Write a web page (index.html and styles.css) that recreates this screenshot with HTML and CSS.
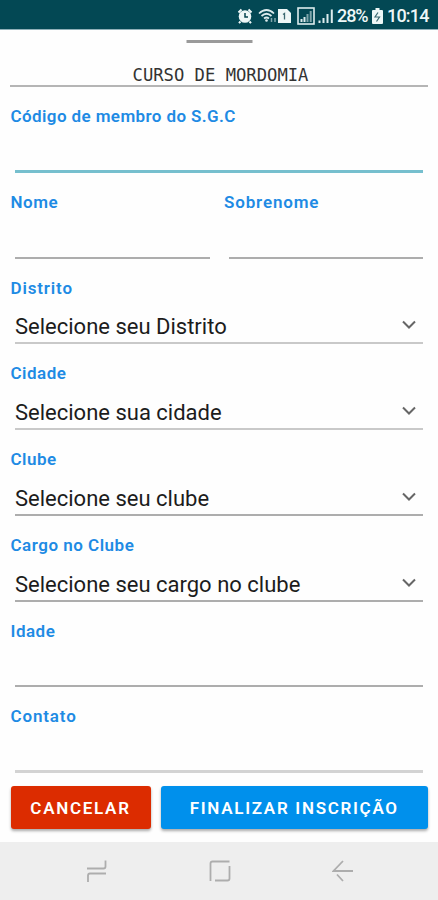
FILE: index.html
```
<!DOCTYPE html>
<html lang="pt-BR">
<head>
    <meta charset="UTF-8">
    <meta name="viewport" content="width=device-width, initial-scale=1">
    <title>Curso de Mordomia</title>
    <link rel="stylesheet" href="styles.css">
</head>

<body>
<div class="status">
    <svg width="16" height="16" viewBox="0 0 16 16">
        <circle cx="8" cy="8.5" r="6.3" fill="#eef7f7"/>
        <path d="M1.5 4.5L4.5 1.5M11.5 1.5l3 3M3.5 13.5L2 15.2M12.5 13.5l1.5 1.7" stroke="#eef7f7" stroke-width="2"/>
        <path d="M8 5v4h3" fill="none" stroke="#04444f" stroke-width="1.5"/>
    </svg>
    <svg class="wifi" width="20" height="16" viewBox="0 0 20 16" fill="none" stroke="#dcebed">
        <path d="M1 5.5Q8.500-1.500 16 5.500M3.500 8Q8.500 3.500 13.500 8M6 10.500q2.500-2 5 0" stroke-width="1.7"/>
        <circle cx="8.500" cy="12.500" r="1.300" fill="#dcebed" stroke="none"/>
        <path d="M13.500 10v4M17 10v4" stroke="#7fa5ab" stroke-width="1.500"/>
    </svg>
    <svg class="sim" width="14" height="16" viewBox="0 0 14 16">
        <path d="M0 1h9l4 4v10H0z" fill="#eef7f7"/>
        <path d="M5 6.500L6.500 5.500v6" fill="none" stroke="#3a6870" stroke-width="1.300"/>
    </svg>
    <svg class="boxed" width="18" height="18" viewBox="0 0 18 18">
        <rect x="1" y="1" width="16" height="16" fill="none" stroke="#dcebed" stroke-width="1.600"/>
        <path d="M4.500 12v3M7.500 10v5" stroke="#dcebed" stroke-width="2"/>
        <path d="M10.500 7v8M13.700 4v11" stroke="#7fa5ab" stroke-width="2"/>
    </svg>
    <svg class="signal" width="16" height="16" viewBox="0 0 16 16" stroke="#dcebed" stroke-width="2">
        <path d="M1.500 12.500v2.500M5.500 10v5M9.500 6v9M13.800 1.500V15"/>
    </svg>
    <span class="percent">28%</span>
    <svg class="battery" width="11" height="16" viewBox="0 0 11 16">
        <path d="M3.500 0h4v2H10q1 0 1 1v12q0 1-1 1H1q-1 0-1-1V3q0-1 1-1h2.500z" fill="#eef7f7"/>
        <path d="M6 4.500L3 9h4.500l-3 4.500" fill="none" stroke="#3a6870" stroke-width="1.200"/>
    </svg>
    <span class="clock">10:14</span>
</div>

<div class="sheet">
    <div class="handle"></div>
    <h1>CURSO DE MORDOMIA</h1>

    <div class="field active">
        <label class="codigo">Código de membro do S.G.C</label>
        <div class="input"></div>
    </div>
    <div class="row">
        <div class="field">
            <label>Nome</label>
            <div class="input"></div>
        </div>
        <div class="field">
            <label class="wide">Sobrenome</label>
            <div class="input"></div>
        </div>
    </div>
    <div class="field">
        <label class="wide">Distrito</label>
        <div class="input light">Selecione seu Distrito
            <svg class="arrow" width="16" height="10" viewBox="0 0 16 10"><path d="M2 1.500l6 6 6-6"/></svg>
        </div>
    </div>
    <div class="field">
        <label>Cidade</label>
        <div class="input light">Selecione sua cidade
            <svg class="arrow" width="16" height="10" viewBox="0 0 16 10"><path d="M2 1.500l6 6 6-6"/></svg>
        </div>
    </div>
    <div class="field">
        <label>Clube</label>
        <div class="input">Selecione seu clube
            <svg class="arrow" width="16" height="10" viewBox="0 0 16 10"><path d="M2 1.500l6 6 6-6"/></svg>
        </div>
    </div>
    <div class="field">
        <label>Cargo no Clube</label>
        <div class="input">Selecione seu cargo no clube
            <svg class="arrow" width="16" height="10" viewBox="0 0 16 10"><path d="M2 1.500l6 6 6-6"/></svg>
        </div>
    </div>
    <div class="field">
        <label>Idade</label>
        <div class="input"></div>
    </div>
    <div class="field last">
        <label class="wide">Contato</label>
        <div class="input"></div>
    </div>

    <div class="buttons">
        <button class="cancel">CANCELAR</button>
        <button class="finish">FINALIZAR INSCRIÇÃO</button>
    </div>
</div>

<div class="nav">
    <svg width="22" height="24" viewBox="0 0 22 24"><path d="M1 9.500h16.500q2 0 2-2V1.500M20 14.500H4q-2 0-2 2V23"/></svg>
    <svg width="22" height="24" viewBox="0 0 22 24"><path d="M20.500 2.500H3.500q-2 0-2 2V22M6 21.500h12.500q2 0 2-2V7"/></svg>
    <svg width="22" height="24" viewBox="0 0 22 24"><path d="M21 12H1.500L11 2M5 15.500l6 6.500"/></svg>
</div>
</body>
</html>
```
FILE: styles.css
```
* {
    box-sizing: border-box;
}
body {
    margin: 0;
    height: 900px;
    display: flex;
    flex-direction: column;
    background-color: #fefefe;
    font-family: Roboto, sans-serif;
    overflow: hidden;
}
.status {
    height: 30px;
    padding: 2px 9px 0 0;
    display: flex;
    align-items: center;
    justify-content: flex-end;
    background-color: #034854;
    border-bottom: 1px solid #8fb0b8;
    color: #eef7f7;
    font-size: 18px;
}
.status svg {
    flex: none;
}
.status span {
    white-space: nowrap;
}
.wifi {
    margin-left: 5px;
}
.boxed {
    margin-left: 5px;
}
.signal {
    margin-left: 3px;
}
.percent {
    width: 31px;
    margin-left: 3px;
    letter-spacing: -1.1px;
    font-weight: 500;
}
.battery {
    margin-left: 4px;
}
.clock {
    width: 42px;
    margin-left: 4px;
    letter-spacing: -0.8px;
    font-weight: 500;
}
.sheet {
    height: 812px;
    padding: 0 10px;
}
.handle {
    width: 66px;
    height: 3px;
    margin: 10px auto 0;
    background-color: #9a9a9a;
    transform: translateX(0.5px);
}
h1 {
    height: 44px;
    margin: 0;
    padding: 22px 0 0 3px;
    border-bottom: 2px solid #b5b5b5;
    color: #333;
    font: 17.2px/20px "DejaVu Sans Mono", monospace;
    text-align: center;
}
.field {
    flex: 1;
    height: 85.75px;
    padding-top: 19px;
    display: flex;
    flex-direction: column;
}
label {
    color: #1e8be4;
    font-size: 17px;
    font-weight: 600;
    line-height: 20px;
    letter-spacing: 0.5px;
    padding-left: 0.5px;
}
.codigo {
    letter-spacing: 0.4px;
}
.wide {
    letter-spacing: 0.85px;
}
.input {
    flex: 1;
    margin: 0 5px;
    padding: 15px 6px 0 0;
    display: flex;
    align-items: center;
    justify-content: space-between;
    border-bottom: 2px solid #adadad;
    color: #1c1c1c;
    font-size: 22px;
    line-height: 26px;
}
.light {
    border-color: #c9c9c9;
}
.active .input {
    border-bottom: 3px solid #76bfce;
}
.last .input {
    border-bottom: 3px solid #d3d3d3;
}
.row {
    display: flex;
    gap: 9px;
}
.arrow {
    fill: none;
    stroke: #666;
    stroke-width: 2;
    transform: translateY(-2px);
}
.buttons {
    display: flex;
    gap: 10px;
    padding: 13px 0 0 0.5px;
}
button {
    height: 43px;
    padding: 0;
    border: none;
    border-radius: 3px;
    box-shadow: 0 2px 3px #0005;
    color: #fff;
    font: 600 17px Roboto, sans-serif;
    letter-spacing: 1.7px;
}
.cancel {
    width: 140px;
    background-color: #dc2c00;
}
.finish {
    flex: 1;
    background-color: #0090ec;
}
.nav {
    height: 58px;
    padding-left: 2px;
    display: flex;
    justify-content: center;
    align-items: center;
    gap: 101px;
    background-color: #eee;
}
.nav svg {
    fill: none;
    stroke: #adadad;
    stroke-width: 1.8;
}
```
